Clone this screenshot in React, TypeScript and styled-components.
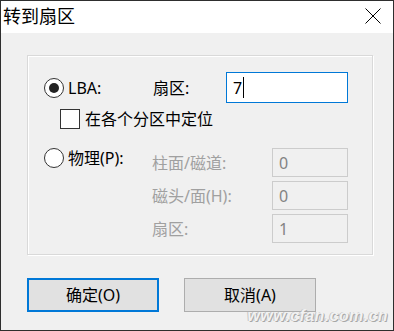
import React from "react";
import styled, { createGlobalStyle } from "styled-components";

const Global = createGlobalStyle`
  html, body { margin: 0; padding: 0; background: #fff; }
  * { box-sizing: border-box; }
`;

const FONT = `"Noto Sans", "Noto Sans CJK SC", sans-serif`;

const Window = styled.div`
  position: relative;
  width: 394px;
  height: 331px;
  border: 1px solid #2e2e2e;
  background: #f0f0f0;
  display: flex;
  flex-direction: column;
  font-family: ${FONT};
  font-size: 16px;
  color: #000;
  overflow: hidden;
`;

const TitleBar = styled.div`
  height: 32px;
  flex: none;
  background: #fff;
  display: flex;
  align-items: center;
  justify-content: space-between;
  padding: 0 12px 2px 2px;
`;

const Title = styled.span`
  font-size: 18px;
  line-height: 22px;
`;

const CloseIcon = styled.svg`
  width: 16px;
  height: 16px;
  display: block;
`;

const Body = styled.div`
  flex: 1;
  display: flex;
  flex-direction: column;
  padding: 22px 20px 0 26px;
`;

const GroupBox = styled.div`
  height: 200px;
  border: 1px solid #d9d9d9;
  box-shadow: 1px 1px 0 #fff, inset 1px 1px 0 #fff;
  padding: 16px 0 0 16px;
  display: flex;
  flex-direction: column;
`;

const Row = styled.div`
  display: flex;
  align-items: center;
  height: 31px;
`;

const RadioOption = styled.label<{ $width: number }>`
  display: flex;
  align-items: center;
  gap: 4px;
  width: ${(p) => p.$width}px;
  height: 20px;
  flex: none;
  line-height: 20px;
`;

const Radio = styled.span<{ $checked?: boolean }>`
  width: 20px;
  height: 20px;
  border-radius: 50%;
  border: 1px solid #333;
  background: #fff;
  display: flex;
  align-items: center;
  justify-content: center;
  flex: none;
  &::after {
    content: "";
    width: 10px;
    height: 10px;
    border-radius: 50%;
    background: #222;
    display: ${(p) => (p.$checked ? "block" : "none")};
  }
`;

const FieldLabel = styled.span<{ $width?: number; $disabled?: boolean }>`
  width: ${(p) => (p.$width ? `${p.$width}px` : "auto")};
  flex: none;
  line-height: 20px;
  color: ${(p) => (p.$disabled ? "#a0a0a0" : "#000")};
`;

const TextBox = styled.div`
  width: 122px;
  height: 31px;
  border: 1px solid #0078d7;
  background: #fff;
  padding-left: 6px;
  display: flex;
  align-items: center;
  line-height: 20px;
`;

const Caret = styled.span`
  display: inline-block;
  width: 1px;
  height: 21px;
  background: #000;
  margin-left: 1px;
`;

const CheckRow = styled.label`
  display: flex;
  align-items: center;
  gap: 5px;
  height: 20px;
  margin: 6px 0 0 16px;
  line-height: 20px;
`;

const CheckBox = styled.span`
  width: 20px;
  height: 20px;
  border: 1px solid #333;
  background: #fff;
  flex: none;
`;

const PhysSection = styled.div`
  display: flex;
  align-items: flex-start;
  margin-top: 19px;
`;

const FieldGrid = styled.div`
  display: grid;
  grid-template-columns: 120px 76px;
  grid-auto-rows: 29px;
  row-gap: 4px;
  align-items: center;
`;

const DisabledBox = styled.div`
  height: 29px;
  border: 1px solid #cccccc;
  background: #f0f0f0;
  color: #838383;
  padding-left: 6px;
  display: flex;
  align-items: center;
  line-height: 20px;
`;

const ButtonRow = styled.div`
  display: flex;
  gap: 25px;
  margin-top: 23px;
`;

const Button = styled.button<{ $primary?: boolean }>`
  width: 132px;
  height: 34px;
  padding: 0;
  background: #e1e1e1;
  border: ${(p) => (p.$primary ? "2px solid #0078d7" : "1px solid #adadad")};
  font-family: ${FONT};
  font-size: 16px;
  line-height: 20px;
  color: #000;
`;

const Watermark = styled.div`
  position: absolute;
  right: 5px;
  bottom: 5px;
  font-family: "Liberation Sans", sans-serif;
  font-style: italic;
  font-weight: bold;
  font-size: 16px;
  letter-spacing: 0.4px;
  color: #f2f2f2;
  text-shadow: 1px 1px 0 #a8a8a8, -1px 0 0 #c4c4c4;
`;

export default function App() {
  return (
    <>
      <Global />
      <Window>
        <TitleBar>
          <Title>转到扇区</Title>
          <CloseIcon viewBox="0 0 16 16">
            <path d="M0.5 0.5 L15.5 15.5 M15.5 0.5 L0.5 15.5" stroke="#000" strokeWidth="1" fill="none" />
          </CloseIcon>
        </TitleBar>
        <Body>
          <GroupBox>
            <Row>
              <RadioOption $width={109}>
                <Radio $checked />
                <span>LBA:</span>
              </RadioOption>
              <FieldLabel $width={73}>扇区:</FieldLabel>
              <TextBox>
                7<Caret />
              </TextBox>
            </Row>
            <CheckRow>
              <CheckBox />
              <span>在各个分区中定位</span>
            </CheckRow>
            <PhysSection>
              <RadioOption $width={108}>
                <Radio />
                <span>物理(P):</span>
              </RadioOption>
              <FieldGrid>
                <FieldLabel $disabled>柱面/磁道:</FieldLabel>
                <DisabledBox>0</DisabledBox>
                <FieldLabel $disabled>磁头/面(H):</FieldLabel>
                <DisabledBox>0</DisabledBox>
                <FieldLabel $disabled>扇区:</FieldLabel>
                <DisabledBox>1</DisabledBox>
              </FieldGrid>
            </PhysSection>
          </GroupBox>
          <ButtonRow>
            <Button $primary>确定(O)</Button>
            <Button>取消(A)</Button>
          </ButtonRow>
        </Body>
        <Watermark>www.cfan.com.cn</Watermark>
      </Window>
    </>
  );
}
